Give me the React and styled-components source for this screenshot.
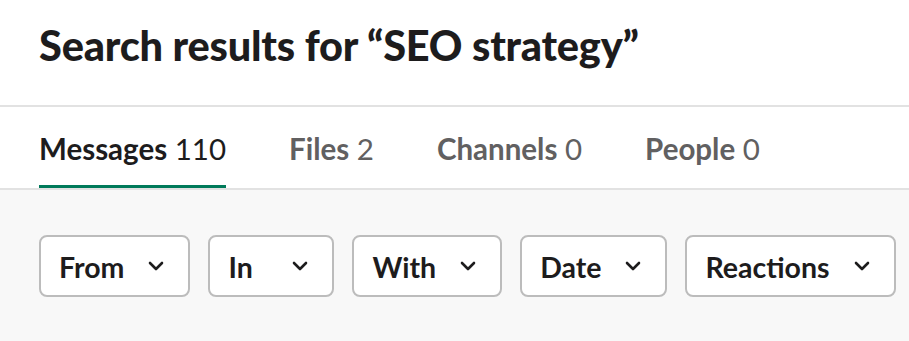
import React from 'react';
import styled, { createGlobalStyle } from 'styled-components';

const GlobalStyle = createGlobalStyle`
  html, body {
    margin: 0;
    padding: 0;
    background: #f8f8f8;
  }
  body {
    font-family: 'Lato', 'Liberation Sans', sans-serif;
    color: #1d1c1d;
  }
`;

const Page = styled.div`
  width: 909px;
  height: 341px;
  display: flex;
  flex-direction: column;
  background: #f8f8f8;
  overflow: hidden;
`;

const Header = styled.header`
  background: #fff;
  padding: 21px 39px 0;
  height: 84px;
  border-bottom: 2px solid #e2e2e2;
`;

const Title = styled.h1`
  margin: 0;
  font-size: 41.5px;
  line-height: 1.2;
  font-weight: 900;
  letter-spacing: -0.2px;
`;

const TabBar = styled.nav`
  background: #fff;
  display: flex;
  gap: 63px;
  padding: 0 39px;
  border-bottom: 2px solid #e2e2e2;
`;

const Tab = styled.div`
  padding: 24px 0 19px;
  font-size: 29.5px;
  line-height: 35px;
  color: ${(p) => (p.$active ? '#1d1c1d' : '#616061')};
  border-bottom: 3px solid ${(p) => (p.$active ? '#007a5a' : 'transparent')};
`;

const TabLabel = styled.span`
  font-weight: 700;
`;

const TabCount = styled.span`
  font-weight: 400;
`;

const Filters = styled.div`
  display: flex;
  gap: 18px;
  padding: 45px 39px 0;
`;

const FilterButton = styled.button`
  box-sizing: border-box;
  flex-shrink: 0;
  height: 62px;
  min-width: 126px;
  display: flex;
  align-items: center;
  justify-content: space-between;
  gap: 24px;
  padding: 2px 24px 0 18px;
  background: #fff;
  border: 2px solid #bcbcbc;
  border-radius: 8px;
  font-family: 'Lato', 'Liberation Sans', sans-serif;
  font-size: 28.5px;
  font-weight: 700;
  color: #1d1c1d;
  line-height: 1.2;
  white-space: nowrap;

  svg {
    flex-shrink: 0;
    margin-top: -2px;
  }
`;

const Chevron = () => (
  <svg width="16" height="10" viewBox="0 0 16 10" fill="none">
    <polyline
      points="2,2 8,8 14,2"
      stroke="#1d1c1d"
      strokeWidth="2.6"
      strokeLinecap="round"
      strokeLinejoin="round"
    />
  </svg>
);

const tabs = [
  { label: 'Messages', count: 110, active: true },
  { label: 'Files', count: 2 },
  { label: 'Channels', count: 0 },
  { label: 'People', count: 0 },
];

const filters = ['From', 'In', 'With', 'Date', 'Reactions'];

export default function App() {
  return (
    <>
      <GlobalStyle />
      <Page>
        <Header>
          <Title>Search results for “SEO strategy”</Title>
        </Header>
        <TabBar>
          {tabs.map((t) => (
            <Tab key={t.label} $active={t.active}>
              <TabLabel>{t.label}</TabLabel> <TabCount>{t.count}</TabCount>
            </Tab>
          ))}
        </TabBar>
        <Filters>
          {filters.map((f) => (
            <FilterButton key={f}>
              {f}
              <Chevron />
            </FilterButton>
          ))}
        </Filters>
      </Page>
    </>
  );
}
